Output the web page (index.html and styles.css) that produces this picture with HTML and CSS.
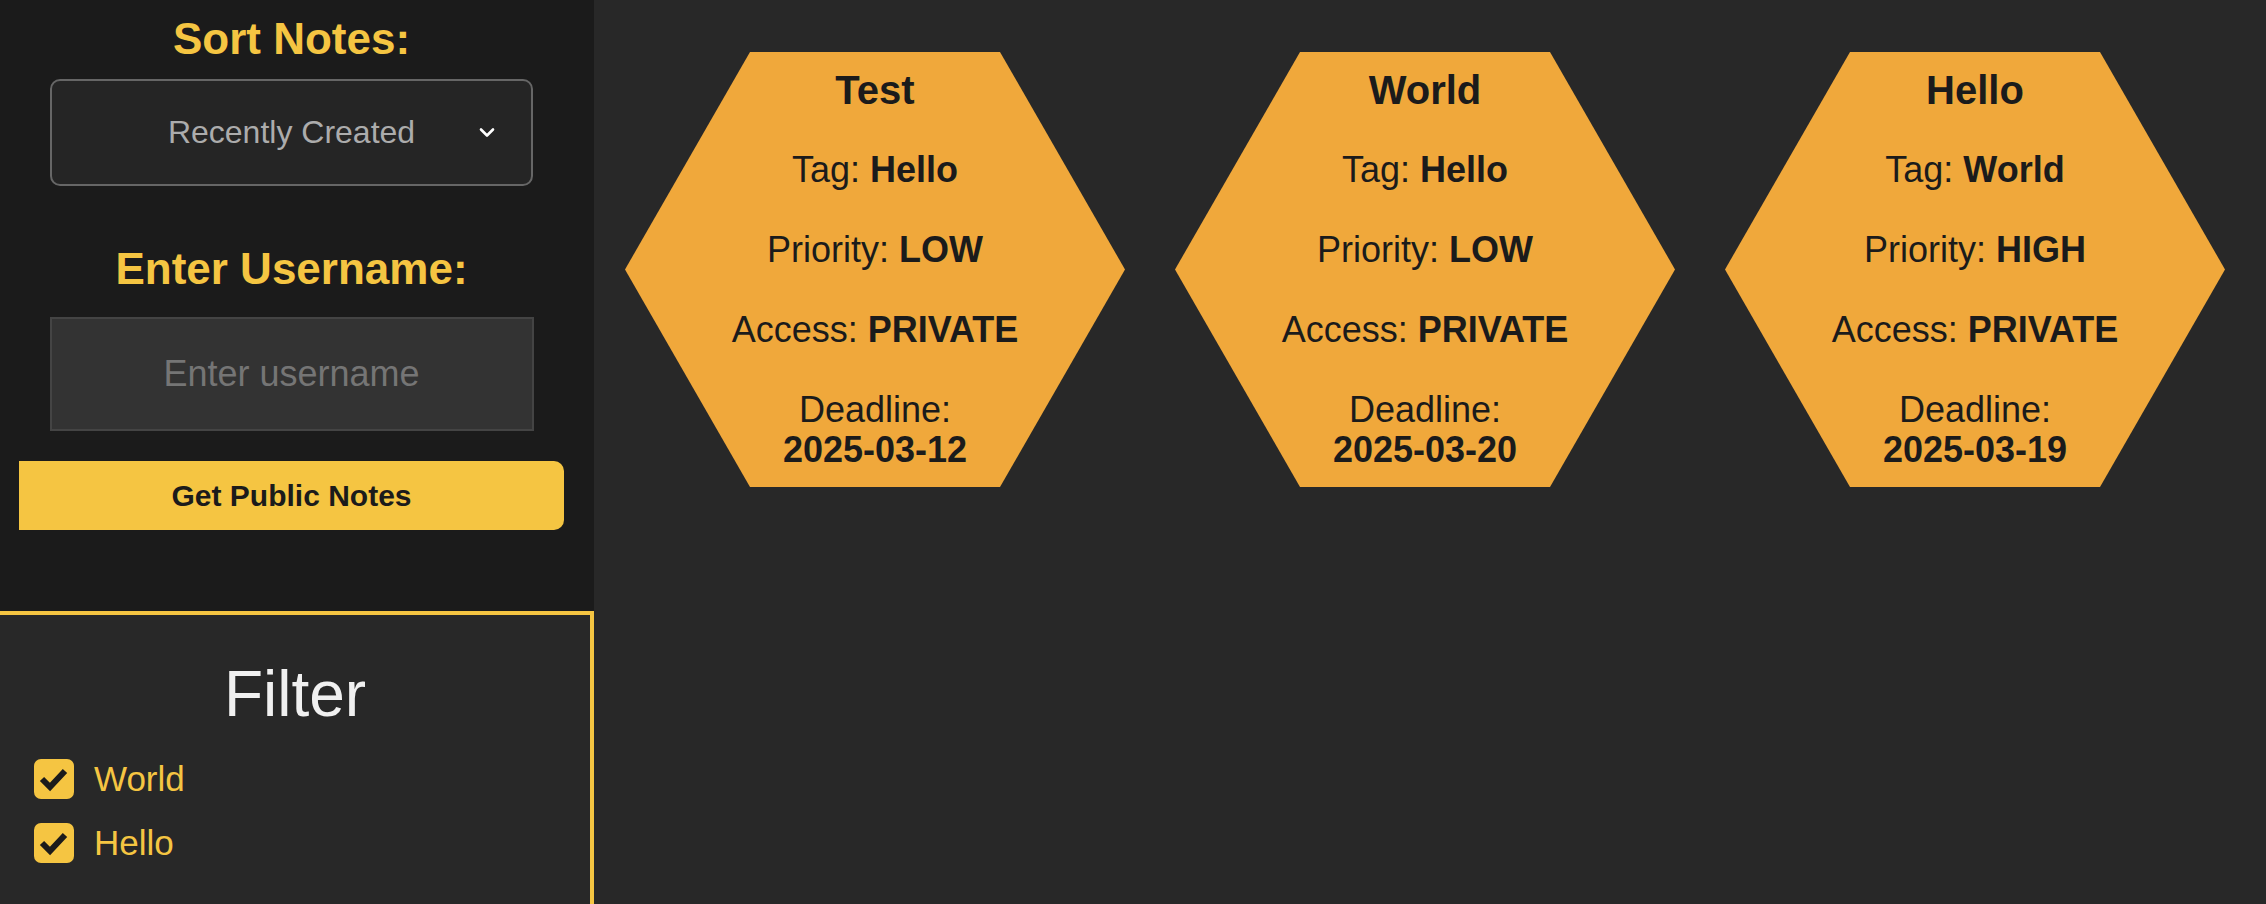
FILE: index.html
```html
<!DOCTYPE html>
<html lang="en">
<head>
<meta charset="utf-8">
<title>Notes</title>
<link rel="stylesheet" href="styles.css">
</head>
<body>
<div class="app">
  <aside class="sidebar">
    <section class="controls">
      <h2 class="label label-sort">Sort Notes:</h2>
      <div class="select">
        <span class="select-spacer"></span>
        <span class="select-value">Recently Created</span>
        <span class="select-arrow">
          <svg width="16" height="11" viewBox="0 0 16 11"><polyline points="2,2.5 8,8.5 14,2.5" fill="none" stroke="#ffffff" stroke-width="2.6" stroke-linecap="round" stroke-linejoin="round"/></svg>
        </span>
      </div>
      <h2 class="label label-user">Enter Username:</h2>
      <input class="username" type="text" placeholder="Enter username">
      <button class="get-btn" type="button">Get Public Notes</button>
    </section>
    <section class="filter">
      <h3 class="filter-title">Filter</h3>
      <ul class="filter-list">
        <li class="filter-item">
          <span class="checkbox"><svg width="40" height="40" viewBox="0 0 40 40"><polyline points="8,20 16,28 31,12" fill="none" stroke="#1b1b1b" stroke-width="6"/></svg></span>
          <span class="filter-label">World</span>
        </li>
        <li class="filter-item">
          <span class="checkbox"><svg width="40" height="40" viewBox="0 0 40 40"><polyline points="8,20 16,28 31,12" fill="none" stroke="#1b1b1b" stroke-width="6"/></svg></span>
          <span class="filter-label">Hello</span>
        </li>
      </ul>
    </section>
  </aside>
  <main class="notes">
    <article class="hex">
      <h3 class="hex-title">Test</h3>
      <p class="hex-line">Tag: <b>Hello</b></p>
      <p class="hex-line">Priority: <b>LOW</b></p>
      <p class="hex-line">Access: <b>PRIVATE</b></p>
      <p class="hex-line">Deadline:<br><b>2025-03-12</b></p>
    </article>
    <article class="hex">
      <h3 class="hex-title">World</h3>
      <p class="hex-line">Tag: <b>Hello</b></p>
      <p class="hex-line">Priority: <b>LOW</b></p>
      <p class="hex-line">Access: <b>PRIVATE</b></p>
      <p class="hex-line">Deadline:<br><b>2025-03-20</b></p>
    </article>
    <article class="hex">
      <h3 class="hex-title">Hello</h3>
      <p class="hex-line">Tag: <b>World</b></p>
      <p class="hex-line">Priority: <b>HIGH</b></p>
      <p class="hex-line">Access: <b>PRIVATE</b></p>
      <p class="hex-line">Deadline:<br><b>2025-03-19</b></p>
    </article>
  </main>
</div>
</body>
</html>
```

FILE: styles.css
```css
* {
  box-sizing: border-box;
}

html, body {
  margin: 0;
  padding: 0;
  height: 100%;
}

body {
  background: #282828;
  font-family: "Liberation Sans", Arial, Helvetica, sans-serif;
  color: #f0f0f0;
  overflow: hidden;
}

.app {
  display: flex;
  height: 904px;
}

.sidebar {
  width: 594px;
  flex: none;
  display: flex;
  flex-direction: column;
}

.controls {
  height: 611px;
  flex: none;
  background: #1b1b1b;
  padding: 0 30px 0 19px;
  display: flex;
  flex-direction: column;
  align-items: center;
}

.label {
  margin: 0;
  font-size: 44px;
  line-height: 50px;
  font-weight: bold;
  color: #f5c542;
  text-align: center;
}

.label-sort {
  margin-top: 14px;
}

.label-user {
  margin-top: 58px;
}

.select {
  margin-top: 15px;
  width: 483px;
  height: 107px;
  border: 2px solid #666666;
  border-radius: 10px;
  background: #252525;
  display: grid;
  grid-template-columns: 1fr auto 1fr;
  align-items: center;
}

.select-value {
  font-size: 32px;
  color: #acacac;
}

.select-arrow {
  justify-self: end;
  margin-right: 36px;
  display: flex;
}

.username {
  margin-top: 23px;
  width: 484px;
  height: 114px;
  background: #333333;
  border: 2px solid #444444;
  border-radius: 0;
  font-family: inherit;
  font-size: 36px;
  color: #dddddd;
  text-align: center;
  outline: none;
  padding: 0;
}

.username::placeholder {
  color: #757575;
}

.get-btn {
  margin-top: 30px;
  width: 100%;
  height: 69px;
  background: #f5c542;
  border: none;
  border-radius: 0 10px 10px 0;
  font-family: inherit;
  font-size: 30px;
  font-weight: bold;
  color: #1b1b1b;
  padding: 0;
}

.filter {
  flex: 1;
  background: #282828;
  border-top: 4px solid #f5c542;
  border-right: 4px solid #f5c542;
  padding: 0 0 0 34px;
}

.filter-title {
  margin: 43px 0 0 -34px;
  font-size: 64px;
  line-height: 72px;
  font-weight: normal;
  color: #f0f0f0;
  text-align: center;
}

.filter-list {
  list-style: none;
  margin: 29px 0 0;
  padding: 0;
  display: flex;
  flex-direction: column;
  gap: 24px;
}

.filter-item {
  display: flex;
  align-items: center;
  gap: 20px;
  height: 40px;
}

.checkbox {
  width: 40px;
  height: 40px;
  border-radius: 7px;
  background: #f5c542;
  display: flex;
}

.filter-label {
  font-size: 35px;
  color: #f5c542;
}

.notes {
  flex: 1;
  display: flex;
  align-items: flex-start;
  gap: 50px;
  padding: 52px 0 0 31px;
}

.hex {
  width: 500px;
  height: 435px;
  flex: none;
  background: #f0a83b;
  clip-path: polygon(25% 0, 75% 0, 100% 50%, 75% 100%, 25% 100%, 0 50%);
  display: flex;
  flex-direction: column;
  align-items: center;
  gap: 40px;
  padding-top: 18px;
  color: #1b1b1b;
  text-align: center;
}

.hex-title {
  margin: 0;
  font-size: 40px;
  line-height: 40px;
  font-weight: bold;
}

.hex-line {
  margin: 0;
  font-size: 36px;
  line-height: 40px;
}

.hex-line b {
  font-weight: bold;
}
```
